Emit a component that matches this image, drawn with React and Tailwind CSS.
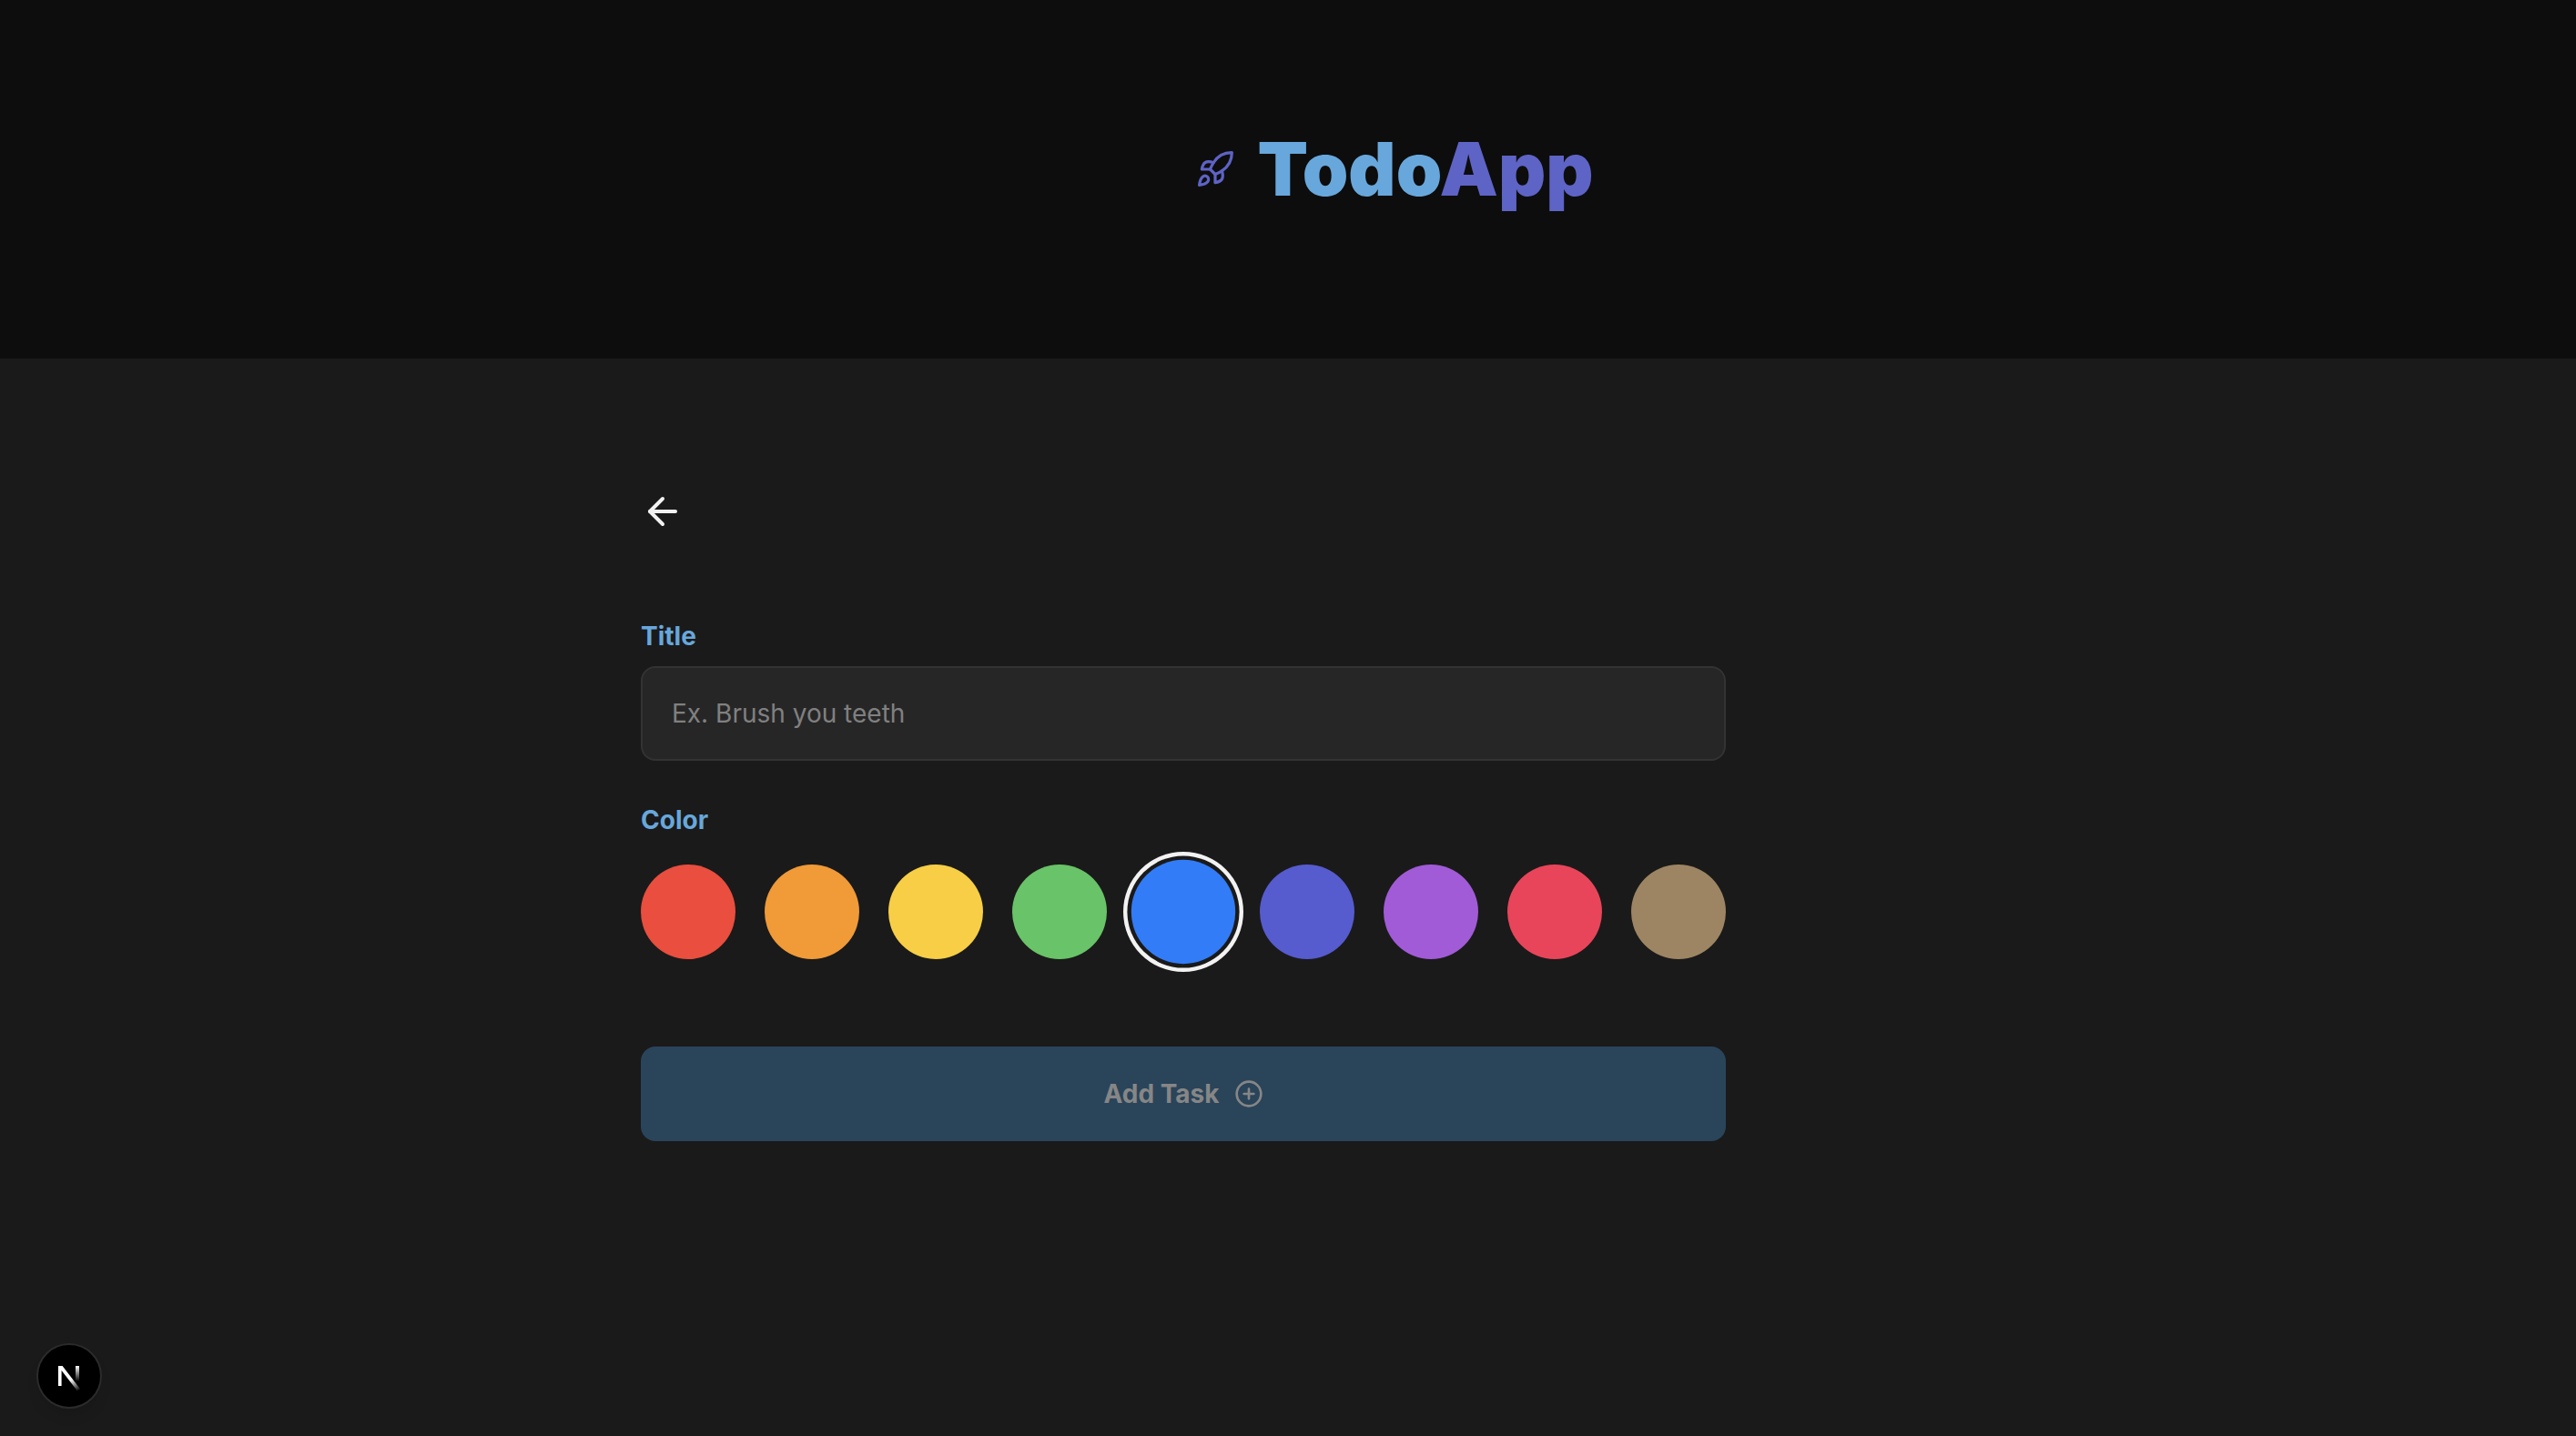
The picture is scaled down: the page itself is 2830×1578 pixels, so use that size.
import { useState } from "react";
import { ArrowLeft, CirclePlus, Rocket } from "lucide-react";

const COLORS = [
  { name: "Red", bg: "bg-[#e94e3e]" },
  { name: "Orange", bg: "bg-[#f09a38]" },
  { name: "Yellow", bg: "bg-[#f7ce46]" },
  { name: "Green", bg: "bg-[#69c368]" },
  { name: "Blue", bg: "bg-[#327cf7]" },
  { name: "Indigo", bg: "bg-[#565bce]" },
  { name: "Purple", bg: "bg-[#a15bd7]" },
  { name: "Pink", bg: "bg-[#e8455a]" },
  { name: "Brown", bg: "bg-[#9d8563]" },
];

function Header() {
  return (
    <header className="flex items-center justify-center gap-6 bg-[#0d0d0d] pt-[126px] pb-[148px] pl-[234px]">
      <Rocket size={44} strokeWidth={1.75} className="text-[#5e63c6]" />
      <h1 className="text-[81px] leading-[120px] font-black text-[#68a7db]">
        Todo<span className="text-[#5e63c6]">App</span>
      </h1>
    </header>
  );
}

function ColorPicker({ value, onChange }) {
  return (
    <fieldset>
      <legend className="leading-[42px] font-bold text-[#68a7db]">Color</legend>
      <div className="mt-7 flex justify-between">
        {COLORS.map(({ name, bg }) => (
          <label
            key={name}
            className={`size-[104px] cursor-pointer rounded-full ${bg} ${
              value === name
                ? "scale-110 ring-4 ring-[#f2f2f2] ring-offset-4 ring-offset-[#1a1a1a]"
                : ""
            }`}
          >
            <input
              type="radio"
              name="color"
              value={name}
              aria-label={name}
              checked={value === name}
              onChange={() => onChange(name)}
              className="sr-only"
            />
          </label>
        ))}
      </div>
    </fieldset>
  );
}

function NextLogo() {
  return (
    <svg width="40" height="40" viewBox="0 0 40 40" fill="none" aria-hidden="true">
      <defs>
        <linearGradient id="stem" x1="0" y1="9" x2="0" y2="26" gradientUnits="userSpaceOnUse">
          <stop stopColor="#fff" />
          <stop offset="1" stopColor="#fff" stopOpacity="0" />
        </linearGradient>
        <linearGradient id="diagonal" x1="22" y1="24" x2="30" y2="37" gradientUnits="userSpaceOnUse">
          <stop stopColor="#fff" />
          <stop offset="1" stopColor="#fff" stopOpacity="0" />
        </linearGradient>
      </defs>
      <path d="M27 9h4v17h-4z" fill="url(#stem)" />
      <path d="M8 9h4.6L32 34.2l-3 2.3L11.6 14v17H8z" fill="url(#diagonal)" />
    </svg>
  );
}

export default function App() {
  const [title, setTitle] = useState("");
  const [color, setColor] = useState("Blue");

  return (
    <div className="min-h-screen bg-[#1a1a1a] font-[Inter,sans-serif] text-[28px] text-[#f2f2f2]">
      <Header />
      <main className="pt-36 pr-[230px]">
        <div className="mx-auto w-full max-w-[1192px]">
          <button type="button" aria-label="Back" className="block cursor-pointer">
            <ArrowLeft size={48} />
          </button>
          <form className="mt-[92px]" onSubmit={(e) => e.preventDefault()}>
            <label htmlFor="title" className="block leading-[42px] font-bold text-[#68a7db]">
              Title
            </label>
            <input
              id="title"
              type="text"
              value={title}
              onChange={(e) => setTitle(e.target.value)}
              placeholder="Ex. Brush you teeth"
              className="mt-3 mb-11 block h-[104px] w-full rounded-2xl border-2 border-[#333] bg-[#262626] px-8 outline-none placeholder:text-[#808080]"
            />
            <ColorPicker value={color} onChange={setColor} />
            <button
              type="submit"
              disabled={!title}
              className="mt-24 flex h-[104px] w-full items-center justify-center gap-4 rounded-2xl bg-[#68a7db] font-bold disabled:bg-[#2a445a] disabled:text-[#868686]"
            >
              Add Task
              <CirclePlus size={32} />
            </button>
          </form>
        </div>
      </main>
      <button
        type="button"
        aria-label="Open developer tools"
        className="fixed bottom-[30px] left-10 flex size-[72px] items-center justify-center rounded-full border-2 border-[#2b2b2b] bg-black shadow-lg"
      >
        <NextLogo />
      </button>
    </div>
  );
}
